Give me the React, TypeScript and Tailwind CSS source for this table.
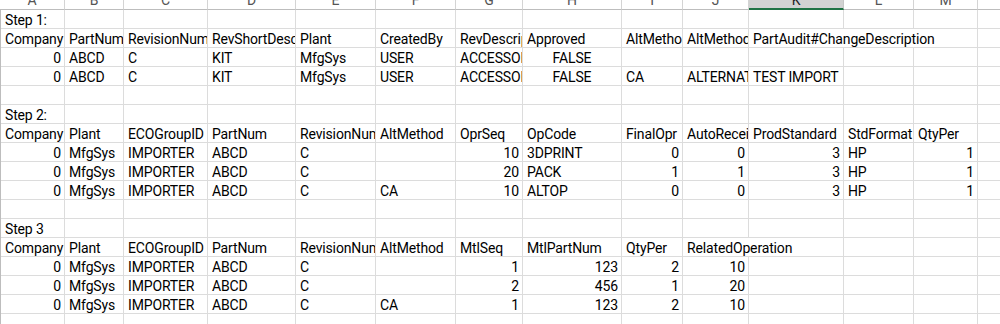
type Cell = { t: string; a?: 'r' | 'c'; s?: number } | null;

const COLS = [
    'w-[64px]', 'w-[59px]', 'w-[84px]', 'w-[88px]', 'w-[80px]', 'w-[80px]', 'w-[67px]',
    'w-[99px]', 'w-[61px]', 'w-[66px]', 'w-[95px]', 'w-[70px]', 'w-[64px]', 'w-[100px]'
];
const SPANS: Record<string, string> = { '9-2': 'w-[161px]', '10-3': 'w-[229px]' };
const LETTERS = ['A', 'B', 'C', 'D', 'E', 'F', 'G', 'H', 'I', 'J', 'K', 'L', 'M', 'N'];

const L = (t: string): Cell => ({ t });
const N = (t: string): Cell => ({ t, a: 'r' });

const rows: Cell[][] = [
    [L('Step 1:')],
    [L('Company'), L('PartNum'), L('RevisionNum'), L('RevShortDesc'), L('Plant'), L('CreatedBy'), L('RevDescription'), L('Approved'), L('AltMethod'), L('AltMethodDesc'), { t: 'PartAudit#ChangeDescription', s: 3 }],
    [N('0'), L('ABCD'), L('C'), L('KIT'), L('MfgSys'), L('USER'), L('ACCESSORY'), { t: 'FALSE', a: 'c' }],
    [N('0'), L('ABCD'), L('C'), L('KIT'), L('MfgSys'), L('USER'), L('ACCESSORY'), { t: 'FALSE', a: 'c' }, L('CA'), L('ALTERNATE'), L('TEST IMPORT')],
    [],
    [L('Step 2:')],
    [L('Company'), L('Plant'), L('ECOGroupID'), L('PartNum'), L('RevisionNum'), L('AltMethod'), L('OprSeq'), L('OpCode'), L('FinalOpr'), L('AutoReceive'), L('ProdStandard'), L('StdFormat'), L('QtyPer')],
    [N('0'), L('MfgSys'), L('IMPORTER'), L('ABCD'), L('C'), null, N('10'), L('3DPRINT'), N('0'), N('0'), N('3'), L('HP'), N('1')],
    [N('0'), L('MfgSys'), L('IMPORTER'), L('ABCD'), L('C'), null, N('20'), L('PACK'), N('1'), N('1'), N('3'), L('HP'), N('1')],
    [N('0'), L('MfgSys'), L('IMPORTER'), L('ABCD'), L('C'), L('CA'), N('10'), L('ALTOP'), N('0'), N('0'), N('3'), L('HP'), N('1')],
    [],
    [L('Step 3')],
    [L('Company'), L('Plant'), L('ECOGroupID'), L('PartNum'), L('RevisionNum'), L('AltMethod'), L('MtlSeq'), L('MtlPartNum'), L('QtyPer'), { t: 'RelatedOperation', s: 2 }],
    [N('0'), L('MfgSys'), L('IMPORTER'), L('ABCD'), L('C'), null, N('1'), N('123'), N('2'), N('10')],
    [N('0'), L('MfgSys'), L('IMPORTER'), L('ABCD'), L('C'), null, N('2'), N('456'), N('1'), N('20')],
    [N('0'), L('MfgSys'), L('IMPORTER'), L('ABCD'), L('C'), L('CA'), N('1'), N('123'), N('2'), N('10')],
    [],
    []
];

const Row = ({ cells }: { cells: Cell[] }) => {
    const out = [];
    for (let i = 0; i < COLS.length; i++) {
        const c = cells[i] ?? null;
        const span = c?.s ?? 1;
        const w = span > 1 ? SPANS[`${i}-${span}`] : COLS[i];
        const align = c?.a === 'r' ? 'text-right pl-[4px] pr-[3px]' : c?.a === 'c' ? 'text-center px-[2px]' : 'text-left pl-[4px] pr-0';
        out.push(
            <div key={i} className={`${w} ${align} shrink-0 h-[19px] border-r border-b border-[#dcdcdc] overflow-hidden whitespace-nowrap leading-[18px] pt-[1px]`}>
                {c?.t}
            </div>
        );
        i += span - 1;
    }
    return <div className="flex">{out}</div>;
};

export default function App() {
    return (
        <div className="w-[1000px] h-[324px] overflow-hidden bg-white text-black text-[14px] tracking-[-0.15px] font-['Roboto','Liberation_Sans',sans-serif]">
            <div className="flex h-[10px]">
                {LETTERS.map((l, i) => (
                    <div
                        key={l}
                        className={`${i === 0 ? 'w-[65px]' : COLS[i]} shrink-0 h-[10px] overflow-hidden border-r text-center leading-[14px] ${
                            l === 'K'
                                ? 'bg-[#d2d2d2] border-r-[#c6c6c6] border-b-2 border-b-[#1f7244] text-[#1f1f1f]'
                                : 'border-r-[#d4d4d4] border-b border-b-[#bdbdbd] text-[#555555]'
                        }`}
                    >
                        <div className="mt-[-7px]">{l}</div>
                    </div>
                ))}
            </div>
            <div className="border-l border-[#bdbdbd]">
                {rows.map((r, i) => <Row key={i} cells={r} />)}
            </div>
        </div>
    );
}
